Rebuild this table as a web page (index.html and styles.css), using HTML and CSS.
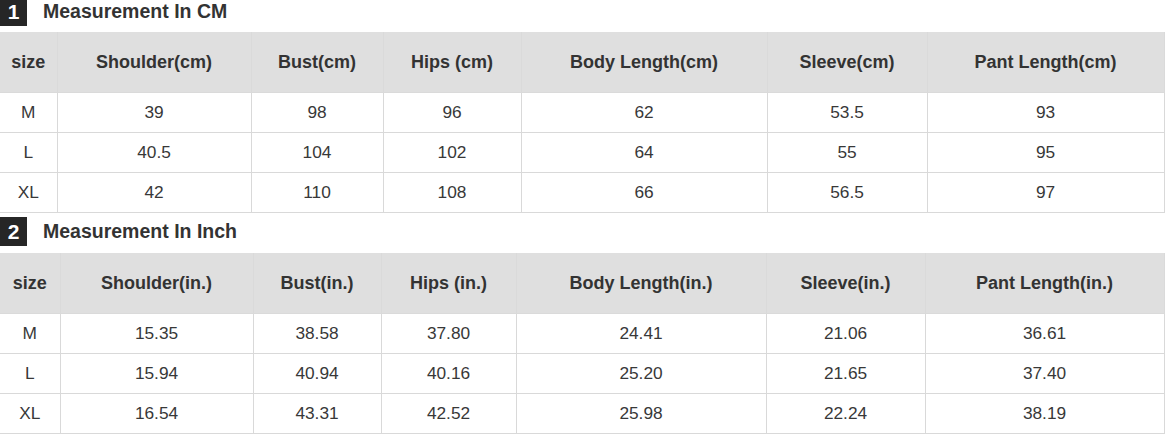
FILE: index.html
```html
<!DOCTYPE html>
<html>
<head>
<meta charset="utf-8">
<link rel="stylesheet" href="styles.css">
</head>
<body>
<section class="block block-cm">
  <div class="title"><span class="badge">1</span><h2>Measurement In CM</h2></div>
  <table class="sizes">
    <colgroup><col><col><col><col><col><col><col></colgroup>
    <thead>
      <tr><th>size</th><th>Shoulder(cm)</th><th>Bust(cm)</th><th>Hips (cm)</th><th>Body Length(cm)</th><th>Sleeve(cm)</th><th>Pant Length(cm)</th></tr>
    </thead>
    <tbody>
      <tr><td>M</td><td>39</td><td>98</td><td>96</td><td>62</td><td>53.5</td><td>93</td></tr>
      <tr><td>L</td><td>40.5</td><td>104</td><td>102</td><td>64</td><td>55</td><td>95</td></tr>
      <tr><td>XL</td><td>42</td><td>110</td><td>108</td><td>66</td><td>56.5</td><td>97</td></tr>
    </tbody>
  </table>
</section>
<section class="block block-in">
  <div class="title"><span class="badge">2</span><h2>Measurement In Inch</h2></div>
  <table class="sizes">
    <colgroup><col><col><col><col><col><col><col></colgroup>
    <thead>
      <tr><th>size</th><th>Shoulder(in.)</th><th>Bust(in.)</th><th>Hips (in.)</th><th>Body Length(in.)</th><th>Sleeve(in.)</th><th>Pant Length(in.)</th></tr>
    </thead>
    <tbody>
      <tr><td>M</td><td>15.35</td><td>38.58</td><td>37.80</td><td>24.41</td><td>21.06</td><td>36.61</td></tr>
      <tr><td>L</td><td>15.94</td><td>40.94</td><td>40.16</td><td>25.20</td><td>21.65</td><td>37.40</td></tr>
      <tr><td>XL</td><td>16.54</td><td>43.31</td><td>42.52</td><td>25.98</td><td>22.24</td><td>38.19</td></tr>
    </tbody>
  </table>
</section>
</body>
</html>
```

FILE: styles.css
```css
html, body {
  margin: 0;
  padding: 0;
  background: #ffffff;
}
body {
  font-family: "Liberation Sans", Arial, sans-serif;
  color: #333333;
  width: 1165px;
  overflow: hidden;
}
.title {
  display: flex;
  align-items: center;
  height: 29px;
  margin: 4px 0 7px;
}
.block-cm .title {
  margin: -3px 0 6px;
}
.badge {
  width: 27px;
  height: 29px;
  background: #262626;
  color: #ffffff;
  font-weight: bold;
  font-size: 21px;
  line-height: 29px;
  text-align: center;
}
.title h2 {
  margin: 0 0 0 16px;
  font-size: 19.5px;
  font-weight: bold;
  color: #333333;
}
.sizes {
  border-collapse: collapse;
  table-layout: fixed;
  width: 1164px;
}
.sizes th {
  background: #dfdfdf;
  height: 60px;
  padding: 0;
  font-size: 18px;
  font-weight: bold;
  color: #333333;
  border: 1px solid #dadada;
  border-top: 0;
  border-left: 0;
  text-align: center;
}
.sizes td {
  height: 39px;
  padding: 0;
  font-size: 17.3px;
  color: #383838;
  text-align: center;
  border: 1px solid #d9d9d9;
  border-left: 0;
}
.sizes th:first-child, .sizes td:first-child {
  border-left: 0;
}
.block-cm col:nth-child(1) { width: 57px; }
.block-cm col:nth-child(2) { width: 194px; }
.block-cm col:nth-child(3) { width: 132px; }
.block-cm col:nth-child(4) { width: 138px; }
.block-cm col:nth-child(5) { width: 246px; }
.block-cm col:nth-child(6) { width: 160px; }
.block-cm col:nth-child(7) { width: 237px; }
.block-in col:nth-child(1) { width: 60px; }
.block-in col:nth-child(2) { width: 193px; }
.block-in col:nth-child(3) { width: 128px; }
.block-in col:nth-child(4) { width: 135px; }
.block-in col:nth-child(5) { width: 250px; }
.block-in col:nth-child(6) { width: 159px; }
.block-in col:nth-child(7) { width: 239px; }
```
